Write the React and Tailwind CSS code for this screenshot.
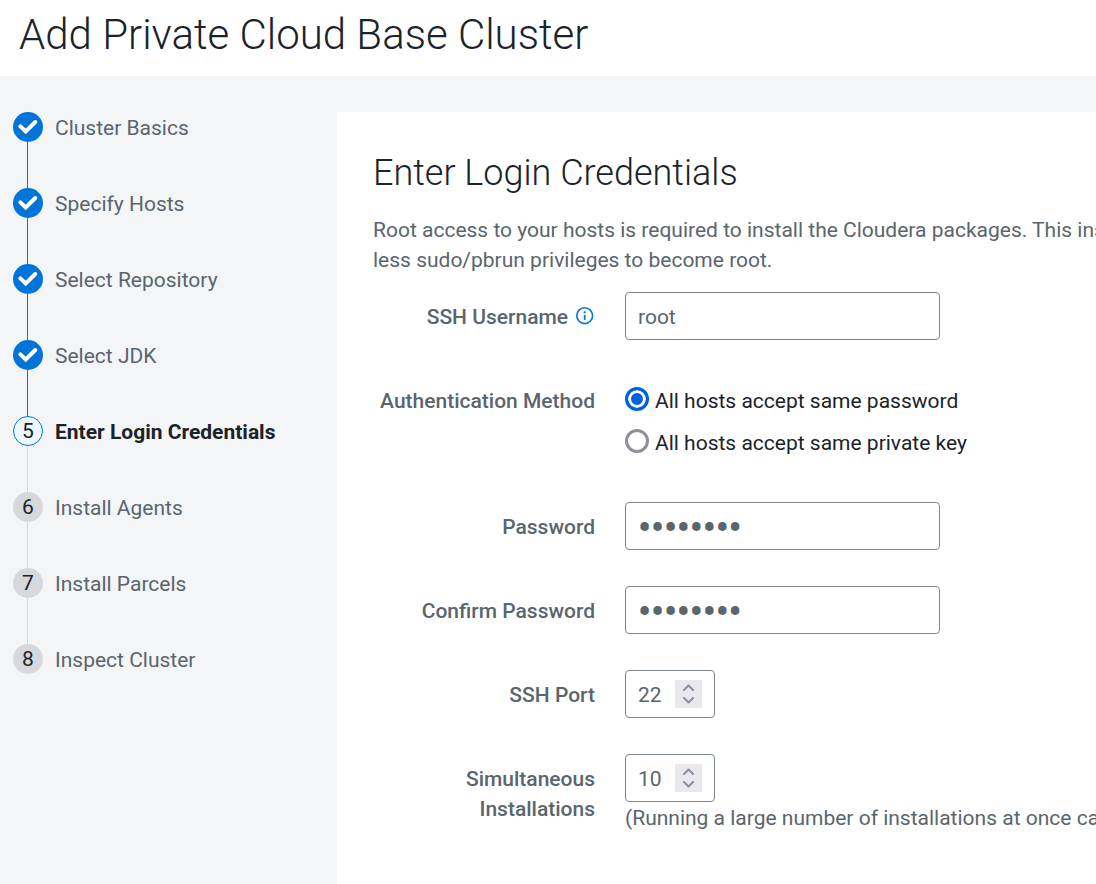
import { useState } from "react";

const steps = [
  { label: "Cluster Basics", state: "done" },
  { label: "Specify Hosts", state: "done" },
  { label: "Select Repository", state: "done" },
  { label: "Select JDK", state: "done" },
  { label: "Enter Login Credentials", state: "current" },
  { label: "Install Agents", state: "todo" },
  { label: "Install Parcels", state: "todo" },
  { label: "Inspect Cluster", state: "todo" },
];

const badgeStyles = {
  done: "bg-[#0074d9]",
  current: "border border-[#0074d9] bg-[#edf7ff] text-[#1b2329]",
  todo: "bg-[#d6d8db] text-[#1b2329]",
};

function Step({ step, number, last }) {
  return (
    <li className="flex gap-3" aria-current={step.state === "current" ? "step" : undefined}>
      <div className="flex flex-col">
        <span
          className={`flex size-[30px] items-center justify-center rounded-full leading-[28px] ${badgeStyles[step.state]}`}
        >
          {step.state === "done" ? (
            <svg viewBox="0 0 30 30" className="size-[30px]" fill="none" aria-hidden="true">
              <path d="M7.4 14.4 12.7 19.4 22.3 10" stroke="#fff" strokeWidth="4" strokeLinecap="round" />
            </svg>
          ) : (
            number
          )}
        </span>
        {!last && (
          <span className={`ml-[14px] h-[46px] w-px ${step.state === "done" ? "bg-[#0074d9]" : "bg-[#d6d8db]"}`} />
        )}
      </div>
      <a
        href="#"
        className={`h-[30px] leading-[32px] ${step.state === "current" ? "font-bold text-[#1b2329]" : "text-[#5a656d]"}`}
      >
        {step.label}
      </a>
    </li>
  );
}

function InfoIcon() {
  return (
    <svg viewBox="0 0 18 18" className="size-[18px]" fill="none" aria-hidden="true">
      <circle cx="8.7" cy="8.7" r="7.9" stroke="#0074d9" strokeWidth="1.6" />
      <path d="M8.7 7.8V12.9" stroke="#0074d9" strokeWidth="1.7" />
      <path d="M8.7 4.3V6.2" stroke="#0074d9" strokeWidth="2" />
    </svg>
  );
}

function Row({ label, htmlFor, id, info, children }) {
  const Tag = htmlFor ? "label" : "span";
  return (
    <div className="grid grid-cols-[222px_minmax(0,1fr)] gap-[30px]">
      <div className="flex items-start justify-end gap-2 pt-[10px] text-right font-medium text-[#5a656d]">
        <Tag htmlFor={htmlFor} id={id}>
          {label}
        </Tag>
        {info && (
          <button type="button" aria-label="More information" className="mt-[5px] mr-px">
            <InfoIcon />
          </button>
        )}
      </div>
      <div>{children}</div>
    </div>
  );
}

const boxStyle = "h-12 rounded-[4px] border border-[#7f878e] bg-white text-[#5a656d]";

function NumberBox({ id, initial }) {
  const [value, setValue] = useState(initial);
  return (
    <div className={`flex w-[90px] items-center px-3 ${boxStyle}`}>
      <input
        id={id}
        type="number"
        value={value}
        onChange={(e) => setValue(Number(e.target.value))}
        className="w-0 flex-1 pt-[2px] [appearance:textfield] outline-none [&::-webkit-inner-spin-button]:appearance-none"
      />
      <span className="flex h-7 w-[27px] flex-col bg-[#e9e9ed] py-px text-[#8f8f9d]">
        <button
          type="button"
          aria-label="Increase"
          onClick={() => setValue(value + 1)}
          className="flex flex-1 items-center justify-center"
        >
          <svg viewBox="0 0 11 7" className="h-[7px] w-[11px]" fill="none" aria-hidden="true">
            <path d="M1 6 5.5 1.5 10 6" stroke="currentColor" strokeWidth="2" strokeLinecap="round" strokeLinejoin="round" />
          </svg>
        </button>
        <button
          type="button"
          aria-label="Decrease"
          onClick={() => setValue(value - 1)}
          className="flex flex-1 items-center justify-center"
        >
          <svg viewBox="0 0 11 7" className="h-[7px] w-[11px]" fill="none" aria-hidden="true">
            <path d="M1 1 5.5 5.5 10 1" stroke="currentColor" strokeWidth="2" strokeLinecap="round" strokeLinejoin="round" />
          </svg>
        </button>
      </span>
    </div>
  );
}

function Radio({ label, value, defaultChecked }) {
  return (
    <label className="flex items-start gap-[6px] text-[#1b2329]">
      <input
        type="radio"
        name="auth"
        value={value}
        defaultChecked={defaultChecked}
        className="mt-px size-6 appearance-none rounded-full border-[3px] border-[#8f8f9d] bg-white checked:border-[#0060df] checked:bg-[#0060df] checked:shadow-[inset_0_0_0_3px_#fff]"
      />
      {label}
    </label>
  );
}

function PasswordBox({ id }) {
  return (
    <input
      id={id}
      type="password"
      defaultValue="cloudera"
      className={`block w-[315px] px-3 pt-1 text-[36px] font-bold ${boxStyle}`}
    />
  );
}

export default function App() {
  return (
    <div className="flex min-h-screen flex-col overflow-hidden bg-[#f3f5f7] font-['Roboto',sans-serif] text-[21px] leading-[30px]">
      <header className="bg-white px-[19px] pt-[9px] pb-[15px]">
        <h1 className="text-[42px] leading-[52px] font-light text-[#1b2329]">Add Private Cloud Base Cluster</h1>
      </header>
      <div className="flex flex-1 pt-9">
        <nav aria-label="Wizard steps" className="w-[337px] shrink-0 pl-[13px]">
          <ol>
            {steps.map((step, i) => (
              <Step key={step.label} step={step} number={i + 1} last={i === steps.length - 1} />
            ))}
          </ol>
        </nav>
        <main className="min-w-0 flex-1 overflow-hidden bg-white pt-9 pl-9">
          <h2 className="text-[36px] leading-[50px] font-light text-[#1b2329]">Enter Login Credentials</h2>
          <p className="mt-[17px] whitespace-nowrap text-[#5a656d]">
            Root access to your hosts is required to install the Cloudera packages. This installer
            <br />
            less sudo/pbrun privileges to become root.
          </p>
          <form className="mt-[17px] flex flex-col gap-9">
            <Row label="SSH Username" htmlFor="username" info>
              <input
                id="username"
                type="text"
                defaultValue="root"
                className={`block w-[315px] px-3 pt-[2px] ${boxStyle}`}
              />
            </Row>
            <Row label="Authentication Method" id="auth-label">
              <div role="radiogroup" aria-labelledby="auth-label" className="flex flex-col gap-3 pt-[10px] pb-2">
                <Radio label="All hosts accept same password" value="password" defaultChecked />
                <Radio label="All hosts accept same private key" value="key" />
              </div>
            </Row>
            <Row label="Password" htmlFor="password">
              <PasswordBox id="password" />
            </Row>
            <Row label="Confirm Password" htmlFor="confirm">
              <PasswordBox id="confirm" />
            </Row>
            <Row label="SSH Port" htmlFor="port">
              <NumberBox id="port" initial={22} />
            </Row>
            <Row label="Simultaneous Installations" htmlFor="simultaneous">
              <NumberBox id="simultaneous" initial={10} />
              <p className="mt-px whitespace-nowrap text-[#5a656d]">
                (Running a large number of installations at once can consume
              </p>
            </Row>
          </form>
        </main>
      </div>
    </div>
  );
}
